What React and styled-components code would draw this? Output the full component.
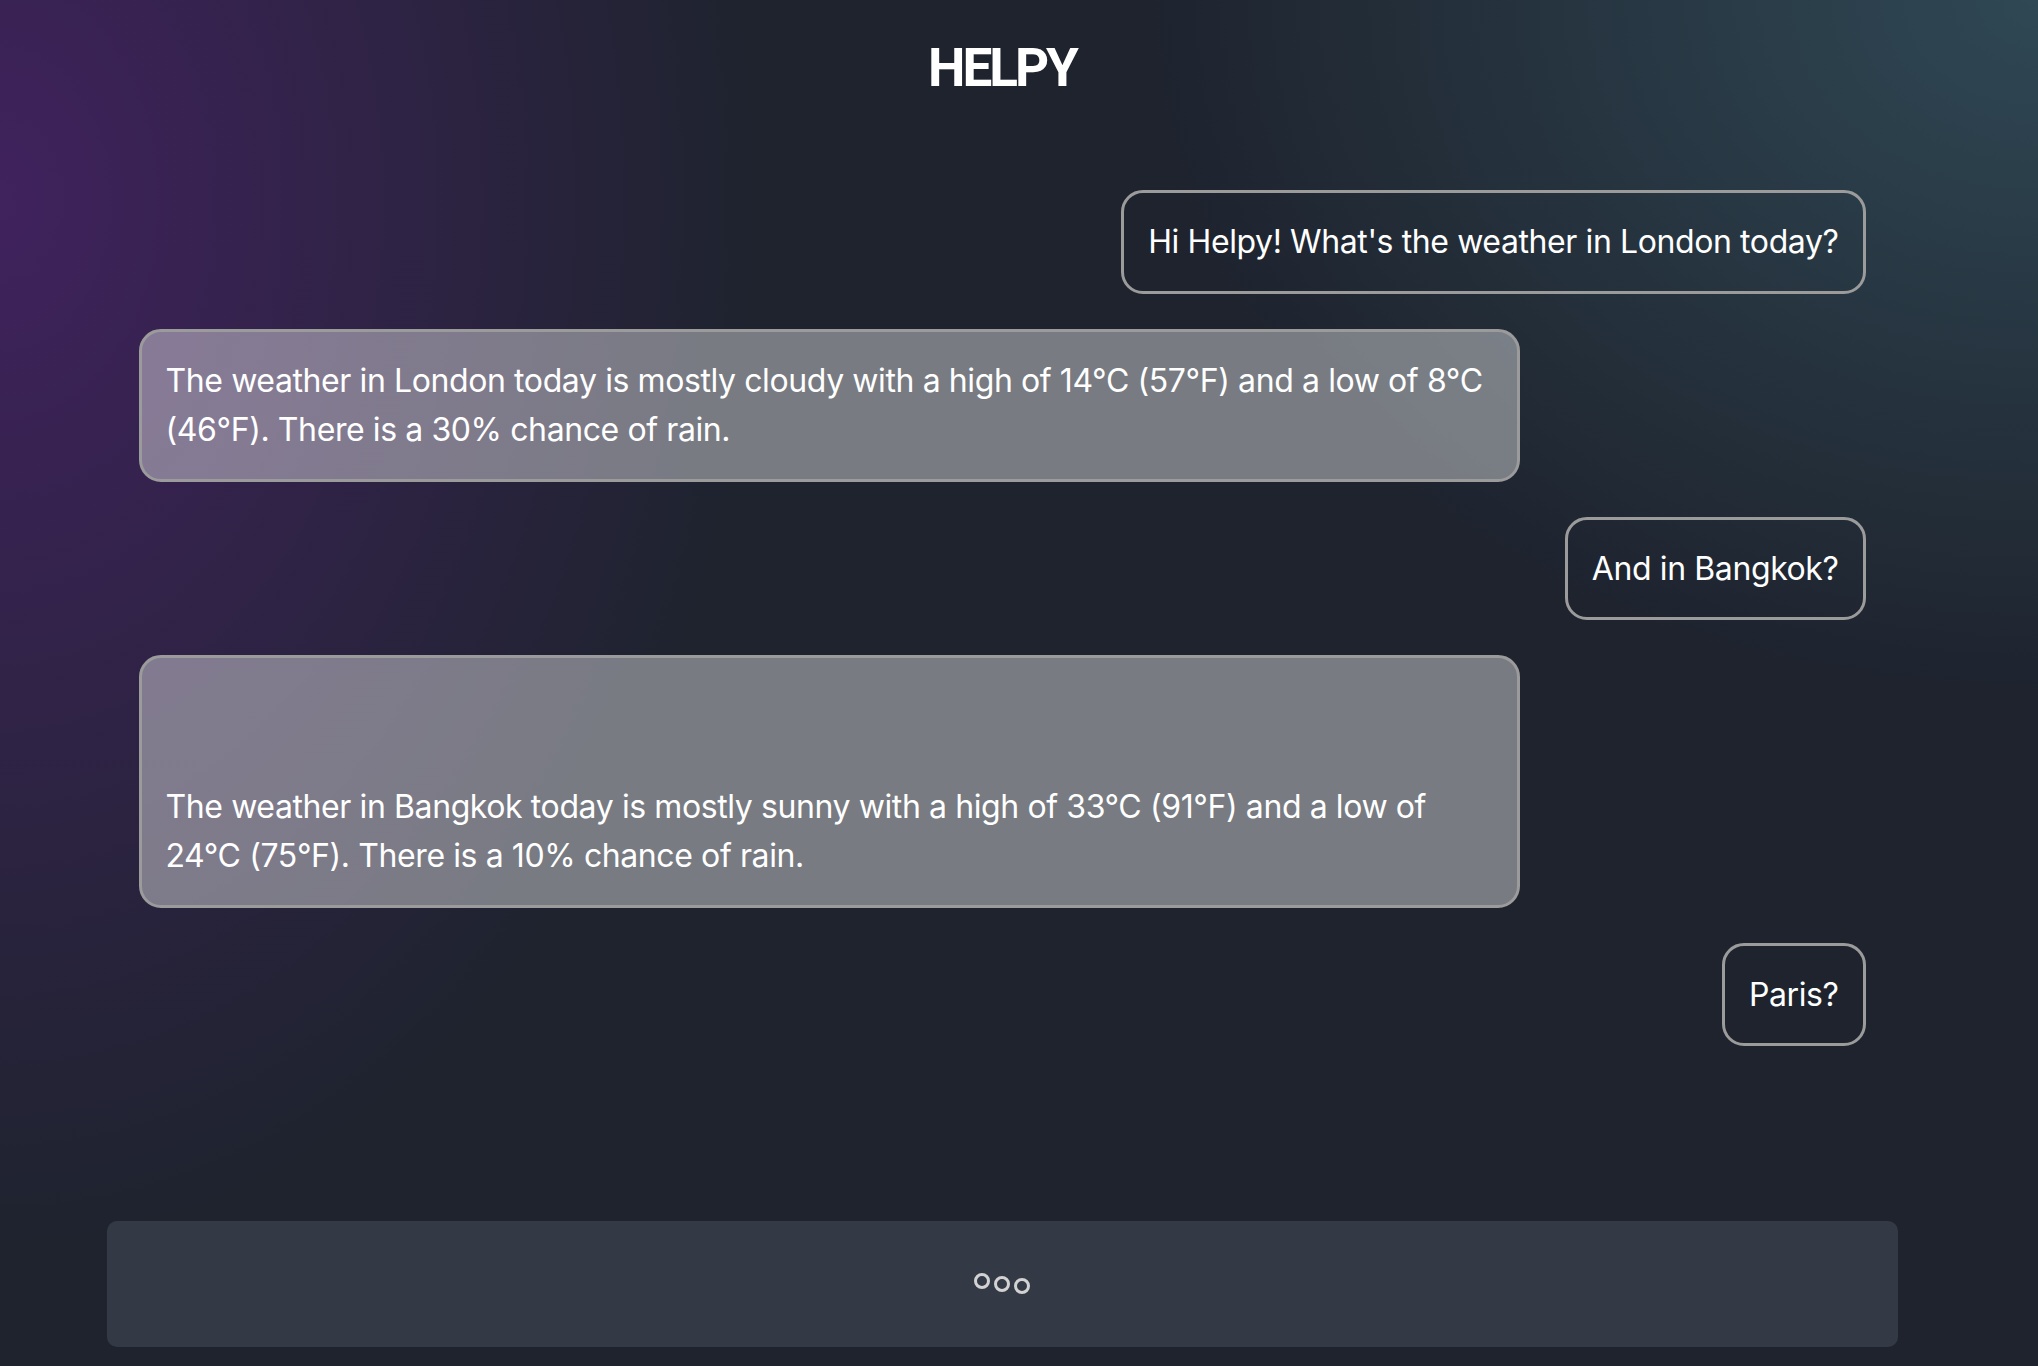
import React from 'react'
import styled, { createGlobalStyle } from 'styled-components';

const messages = [
    { from: 'user', text: "Hi Helpy! What's the weather in London today?" },
    { from: 'bot', text: 'The weather in London today is mostly cloudy with a high of 14°C (57°F) and a low of 8°C (46°F). There is a 30% chance of rain.' },
    { from: 'user', text: 'And in Bangkok?' },
    { from: 'bot', text: '\n\nThe weather in Bangkok today is mostly sunny with a high of 33°C (91°F) and a low of 24°C (75°F). There is a 10% chance of rain.' },
    { from: 'user', text: 'Paris?' },
];

function App() {
    return (
        <>
            <GlobalStyle />
            <Page>
                <Shell>
                    <Title>HELPY</Title>
                    <Messages>
                        {
                            messages.map(({ from, text }, i) => (
                                <Bubble key={i} $bot={from === 'bot'}>{text}</Bubble>
                            ))
                        }
                    </Messages>
                    <InputBar>
                        <Dots>
                            <Dot $shift={0} />
                            <Dot $shift={3} />
                            <Dot $shift={5} />
                        </Dots>
                    </InputBar>
                </Shell>
            </Page>
        </>
    )
}

export default App

const GlobalStyle = createGlobalStyle`
  * { box-sizing: border-box; }
  body {
    margin: 0;
    font-family: Inter, "Noto Sans", sans-serif;
    color: #fff;
    background: #1e232e;
  }
`;

const Page = styled.main`
  height: 100vh;
  display: flex;
  justify-content: center;
  padding-right: 34px;
  background:
    radial-gradient(ellipse 760px 1050px at 0px 200px, rgba(66, 34, 96, 0.95), rgba(66, 34, 96, 0) 100%),
    radial-gradient(ellipse 900px 700px at 2038px 0px, rgba(48, 74, 86, 0.95), rgba(48, 74, 86, 0) 100%),
    #1e232e;
`;

const Shell = styled.div`
  width: 1791px;
  display: flex;
  flex-direction: column;
`;

const Title = styled.h1`
  margin: 0;
  padding-top: 42px;
  font-family: Roboto, "Liberation Sans", sans-serif;
  font-weight: 700;
  font-size: 53px;
  line-height: 53px;
  letter-spacing: -3px;
  text-align: center;
`;

const Messages = styled.div`
  flex: 1;
  display: flex;
  flex-direction: column;
  gap: 35px;
  padding: 95px 32px 0;
`;

const Bubble = styled.div`
  align-self: ${({ $bot }) => ($bot ? 'flex-start' : 'flex-end')};
  width: ${({ $bot }) => ($bot ? '80%' : 'auto')};
  max-width: 80%;
  padding: 24px 24px;
  border: 3px solid #9b9b9b;
  border-radius: 22px;
  background: ${({ $bot }) => ($bot ? 'rgba(255, 255, 255, 0.4)' : 'transparent')};
  font-size: 32px;
  line-height: 49.6px;
  letter-spacing: -0.4px;
  white-space: pre-line;
`;

const InputBar = styled.div`
  height: 126px;
  margin-bottom: 19px;
  border-radius: 10px;
  background: #343a45;
  display: flex;
  align-items: center;
  justify-content: center;
`;

const Dots = styled.div`
  display: flex;
  gap: 4px;
`;

const Dot = styled.span`
  width: 16px;
  height: 16px;
  border: 3px solid #d2d2d2;
  border-radius: 50%;
  transform: translateY(${({ $shift }) => $shift - 3}px);
`;
